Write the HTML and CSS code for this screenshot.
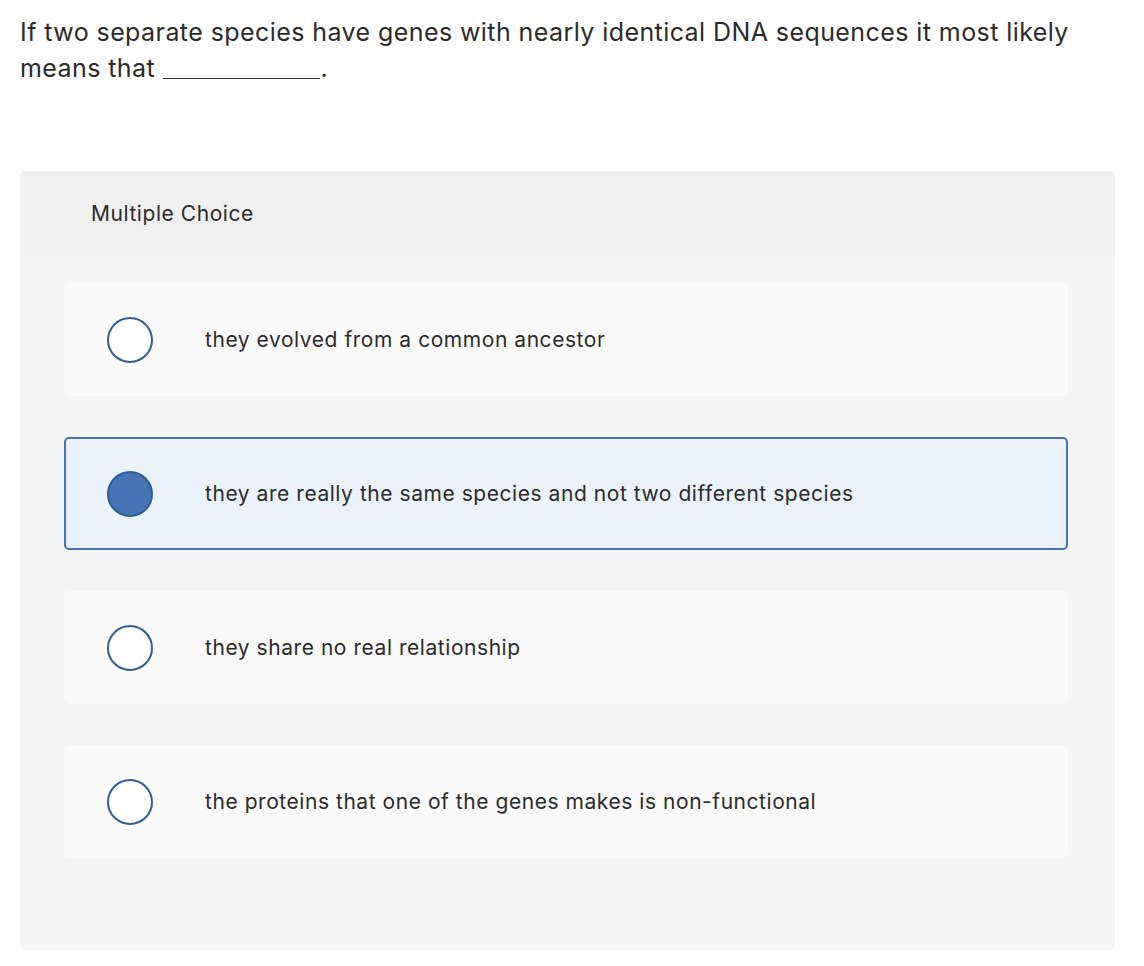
FILE: index.html
```html
<!DOCTYPE html>
<html lang="en">
<head>
    <meta charset="UTF-8">
    <meta name="viewport" content="width=device-width, initial-scale=1.0">
    <title>Multiple Choice</title>
    <link rel="stylesheet" href="styles.css">
</head>
<body>
    <div class="question">
        <p class="prompt"><span>If two separate species have genes with nearly identical DNA sequences it most likely</span> <span>means that</span> <span class="blank"></span>.</p>

        <div class="card">
            <div class="card-header">Multiple Choice</div>
            <div class="choices">
                <label class="choice">
                    <span class="radio"></span>
                    <span class="choice-text">they evolved from a common ancestor</span>
                </label>
                <label class="choice selected">
                    <span class="radio"></span>
                    <span class="choice-text">they are really the same species and not two different species</span>
                </label>
                <label class="choice">
                    <span class="radio"></span>
                    <span class="choice-text">they share no real relationship</span>
                </label>
                <label class="choice">
                    <span class="radio"></span>
                    <span class="choice-text">the proteins that one of the genes makes is non-functional</span>
                </label>
            </div>
        </div>
    </div>
</body>
</html>
```

FILE: styles.css
```css
body {
    font-family: Inter, "Open Sans", Arial, sans-serif;
    color: #2b2b2b;
    background-color: #fff;
    margin: 0;
    padding: 0;
}

.question {
    width: 1095px;
    padding: 14px 0 0 20px;
}

.prompt {
    margin: 0;
    font-size: 25px;
    line-height: 36px;
    letter-spacing: 0.42px;
}

/* fill-in blank drawn as a line */
.blank {
    display: inline-block;
    width: 157px;
    margin-right: 1px;
    vertical-align: -2px;
    border-bottom: 1px solid #2b2b2b;
}

.card {
    margin-top: 85px;
    background-color: #f5f5f5;
    border-radius: 5px;
    overflow: hidden;
}

.card-header {
    height: 85px;
    padding-left: 71px;
    background-color: #f0f0f0;
    font-size: 21px;
    letter-spacing: 0.55px;
    line-height: 85px;
}

.choices {
    display: flex;
    flex-direction: column;
    gap: 41px;
    padding: 27px 47px 92px 44px;
}

.choice {
    display: flex;
    align-items: center;
    height: 113px;
    box-sizing: border-box;
    padding-left: 41px;
    background-color: #fafafa;
    border: 2px solid transparent;
    border-radius: 5px;
    cursor: pointer;
}

.choice.selected {
    background-color: #eaf2fa;
    border-color: #4674b4;
}

.radio {
    width: 46px;
    height: 46px;
    box-sizing: border-box;
    border: 2px solid #2d5f96;
    border-radius: 50%;
    background-color: #fff;
    flex-shrink: 0;
}

.selected .radio {
    background-color: #4674b4;
    border-color: #2f5d95;
}

.choice-text {
    margin-left: 52px;
    font-size: 21px;
    letter-spacing: 0.55px;
}
```
